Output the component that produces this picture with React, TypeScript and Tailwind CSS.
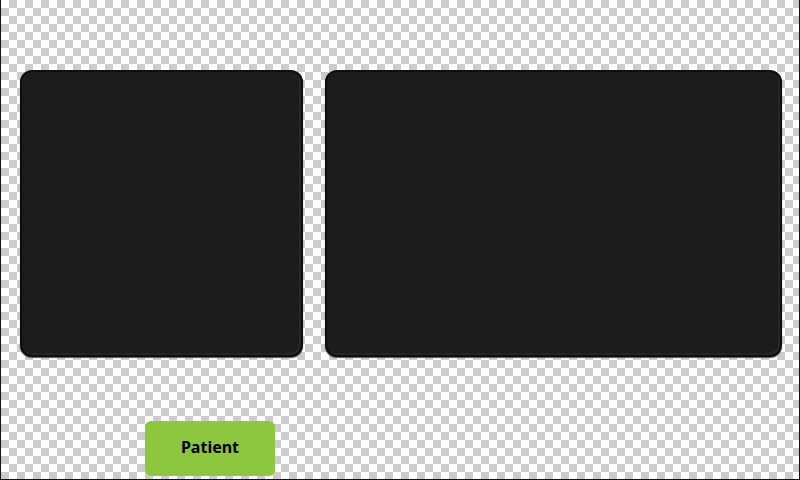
import React from 'react';

const Panel = ({ className }: { className: string }) => (
  <div
    className={`${className} h-[287px] rounded-xl border-2 border-[#0e0e0e] bg-[#1c1c1c] shadow-[inset_-2px_-2px_0_#262626,0_1px_1px_#555]`}
  />
);

const App = () => {
  return (
    <div className="w-[800px] h-[480px] overflow-hidden border-l border-r border-b border-[#111] bg-[repeating-conic-gradient(#cccccc_0_25%,#ffffff_0_50%)] bg-[length:16px_16px] font-['Noto_Sans',sans-serif]">
      {/* Screens */}
      <div className="flex gap-[22px] pl-[19px] pt-[70px]">
        <Panel className="w-[283px]" />
        <Panel className="w-[457px]" />
      </div>

      {/* Mode button */}
      <div className="pl-[144px] pt-[64px]">
        <button className="w-[130px] h-[55px] rounded-md bg-[#8dc63f] pb-[3px] text-[16px] font-bold text-black">
          Patient
        </button>
      </div>
    </div>
  );
};

export default App;
